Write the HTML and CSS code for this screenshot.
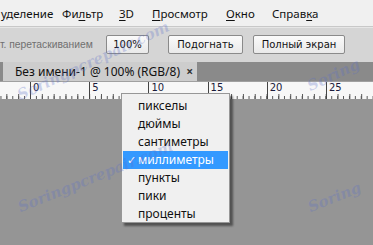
FILE: index.html
```html
<!DOCTYPE html>
<html>
<head>
<meta charset="utf-8">
<link rel="stylesheet" href="styles.css">
</head>
<body>
<div class="app">
  <div class="menubar">
    <span class="mi m1">уделение</span>
    <span class="mi m2">Фи<u>л</u>ьтр</span>
    <span class="mi m3"><u>3</u>D</span>
    <span class="mi m4"><u>П</u>росмотр</span>
    <span class="mi m5"><u>О</u>кно</span>
    <span class="mi m6">Справ<u>к</u>а</span>
  </div>
  <div class="options">
    <span class="opt-label">т. перетаскиванием</span>
    <button class="btn b100">100%</button>
    <button class="btn bfit">Подогнать</button>
    <button class="btn bfull">Полный экран</button>
  </div>
  <div class="tabbar">
    <div class="tab"><span class="tab-title">Без имени-1 @ 100% (RGB/8)</span><span class="tab-x">×</span></div>
  </div>
  <div class="ruler">
    <span class="mark">0</span><span class="mark">5</span><span class="mark">10</span><span class="mark">15</span><span class="mark">20</span><span class="mark">25</span>
  </div>
  <div class="canvas"></div>

  <ul class="dropdown">
    <li>пикселы</li>
    <li>дюймы</li>
    <li>сантиметры</li>
    <li class="sel"><span class="chk">✓</span>миллиметры</li>
    <li>пункты</li>
    <li>пики</li>
    <li>проценты</li>
  </ul>

  <span class="wm wm1">Soringpcrepair.com</span>
  <span class="wm wm2">Soringpcrepair.com</span>
  <span class="wm wm3">Soring</span>
  <span class="wm wm4">Soring</span>
</div>
</body>
</html>
```
FILE: styles.css
```css
html, body {
  margin: 0;
  padding: 0;
}
body {
  width: 373px;
  height: 245px;
  overflow: hidden;
  background: #959595;
  font-family: "Noto Sans", "DejaVu Sans", sans-serif;
}
.app {
  position: relative;
  width: 373px;
  height: 245px;
  display: flex;
  flex-direction: column;
  overflow: hidden;
}
.menubar {
  height: 27px;
  flex: none;
  background: #f0f0f0;
  display: flex;
  align-items: center;
  font-size: 11.5px;
  color: #111;
  box-sizing: border-box;
  border-bottom: 1px solid #c8c8c8;
  padding-left: 1px;
}
.mi { white-space: nowrap; flex: none; }
.m1 { width: 61px; }
.m2 { width: 57px; }
.m3 { width: 33px; }
.m4 { width: 74px; }
.m5 { width: 46px; }
.m6 { width: 60px; }
.mi u { text-decoration-thickness: 1px; text-underline-offset: 2px; }

.options {
  height: 35px;
  flex: none;
  background: #d5d5d5;
  display: flex;
  align-items: center;
  box-sizing: border-box;
  border-top: 1px solid #e6e6e6;
  padding-bottom: 1px;
}
.opt-label {
  font-family: "Liberation Sans", sans-serif;
  font-size: 10.3px;
  color: #707070;
  width: 106px;
  flex: none;
  white-space: nowrap;
  overflow: hidden;
}
.btn {
  height: 19px;
  padding: 0;
  margin: 0;
  border: 1px solid #8a8a8a;
  border-radius: 2px;
  background: linear-gradient(#fafafa, #e9e9e9);
  font-family: "DejaVu Sans", sans-serif;
  font-size: 10px;
  color: #111;
  box-sizing: border-box;
  flex: none;
}
.b100 { width: 43px; }
.bfit { width: 75px; margin-left: 19px; }
.bfull { width: 92px; margin-left: 10px; }

.tabbar {
  height: 19px;
  flex: none;
  background: #8a8a8a;
  display: flex;
  padding-left: 3px;
  box-sizing: border-box;
}
.tab {
  width: 194px;
  background: #cdcdcd;
  display: flex;
  align-items: center;
  justify-content: space-between;
  padding: 0 4px 0 12px;
  box-sizing: border-box;
  font-size: 12px;
  color: #111;
}
.tab-title { white-space: nowrap; }
.tab-x { font-size: 12px; font-weight: bold; color: #333; }

.ruler {
  height: 18px;
  flex: none;
  background-color: #f7f7f7;
  border-top: 1px solid #a0a0a0;
  box-sizing: border-box;
  display: flex;
  padding-left: 30px;
  background-image:
    linear-gradient(to right, #555 1px, transparent 1px),
    linear-gradient(to right, #555 1px, transparent 1px);
  background-size: 11.84px 5px, 5.92px 3px;
  background-position: 30px 100%, 30px 100%;
  background-repeat: repeat-x;
}
.mark {
  width: 59.2px;
  flex: none;
  box-sizing: border-box;
  border-left: 1px solid #444;
  font-family: "DejaVu Sans", sans-serif;
  font-size: 10px;
  line-height: 12px;
  padding-left: 2px;
  color: #1a1a3a;
}
.canvas {
  flex: 1;
  background: #959595;
}

.dropdown {
  position: absolute;
  left: 121px;
  top: 93px;
  width: 109px;
  height: 130px;
  margin: 0;
  padding: 3px 1px 0 1px;
  box-sizing: border-box;
  list-style: none;
  background: #f0f0f0;
  border: 1px solid #979797;
  box-shadow: 3px 3px 2px rgba(0, 0, 0, 0.45);
  font-size: 12px;
  color: #111;
}
.dropdown li {
  height: 18px;
  line-height: 18px;
  padding-left: 15px;
  position: relative;
  white-space: nowrap;
}
.dropdown li.sel {
  background: #3399ff;
  color: #fff;
}
.chk {
  position: absolute;
  left: 4px;
  top: 0;
  font-size: 11px;
}

.wm {
  position: absolute;
  font-family: "DejaVu Serif", serif;
  font-style: italic;
  font-weight: bold;
  font-size: 15px;
  color: rgba(90, 110, 200, 0.28);
  white-space: nowrap;
  transform-origin: 0 100%;
  transform: rotate(-25deg);
  pointer-events: none;
}
.wm1 { left: 22px; top: 86px; }
.wm2 { left: 22px; top: 198px; transform: rotate(-22deg); }
.wm3 { left: 312px; top: 77px; }
.wm4 { left: 312px; top: 198px; transform: rotate(-22deg); }
```
